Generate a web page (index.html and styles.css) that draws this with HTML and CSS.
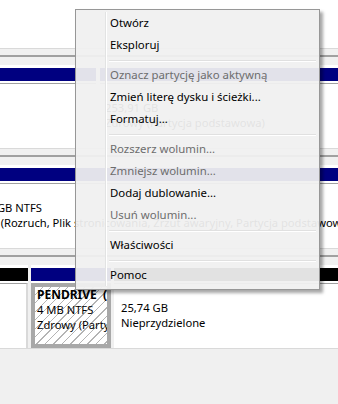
FILE: index.html
```html
<!DOCTYPE html>
<html lang="pl">
<head>
    <meta charset="UTF-8">
    <title>Zarządzanie dyskami</title>
    <link rel="stylesheet" href="styles.css">
</head>
<body>
    <div class="view">
        <div class="disk-tail"></div>

        <div class="disk">
            <div class="parts">
                <div class="part part-a">
                    <div class="bar primary"></div>
                    <div class="body"></div>
                </div>
                <div class="part part-b">
                    <div class="bar primary"></div>
                    <div class="body">
                        <div class="line name">&nbsp;</div>
                        <div class="line">253,91 GB</div>
                        <div class="line">Zdrowy (Partycja podstawowa)</div>
                    </div>
                </div>
            </div>
        </div>

        <div class="disk">
            <div class="parts">
                <div class="part part-wide">
                    <div class="bar primary"></div>
                    <div class="body shifted">
                        <div class="line name">&nbsp;</div>
                        <div class="line">232,79 GB NTFS</div>
                        <div class="line">Zdrowy (Rozruch, Plik stronicowania, Zrzut awaryjny, Partycja podstawowa)</div>
                    </div>
                </div>
            </div>
        </div>

        <div class="disk disk-last">
            <div class="parts">
                <div class="part part-small">
                    <div class="bar free"></div>
                    <div class="body"></div>
                </div>
                <div class="part part-pendrive">
                    <div class="bar primary"></div>
                    <div class="body selected">
                        <div class="line name">PENDRIVE&nbsp;&nbsp;(E:)</div>
                        <div class="line">4 MB NTFS</div>
                        <div class="line">Zdrowy (Partycja podstawowa)</div>
                    </div>
                </div>
                <div class="part part-rest">
                    <div class="bar free"></div>
                    <div class="body">
                        <div class="line name">&nbsp;</div>
                        <div class="line">25,74 GB</div>
                        <div class="line">Nieprzydzielone</div>
                    </div>
                </div>
            </div>
        </div>

        <div class="empty"></div>
    </div>

    <div class="menu">
        <ul>
            <li class="item">Otwórz</li>
            <li class="item">Eksploruj</li>
            <li class="sep"></li>
            <li class="item off">Oznacz partycję jako aktywną</li>
            <li class="item">Zmień literę dysku i ścieżki...</li>
            <li class="item">Formatuj...</li>
            <li class="sep"></li>
            <li class="item off">Rozszerz wolumin...</li>
            <li class="item off">Zmniejsz wolumin...</li>
            <li class="item">Dodaj dublowanie...</li>
            <li class="item off">Usuń wolumin...</li>
            <li class="sep"></li>
            <li class="item">Właściwości</li>
            <li class="sep"></li>
            <li class="item">Pomoc</li>
        </ul>
    </div>
</body>
</html>
```

FILE: styles.css
```css
* {
    box-sizing: border-box;
}
body {
    margin: 0;
    width: 338px;
    height: 404px;
    overflow: hidden;
    position: relative;
    background: #f0f0f0;
    color: #000;
    font-family: "Noto Sans", "Open Sans", sans-serif;
    font-size: 11.2px;
}

/* disk view behind the menu */
.view {
    display: flex;
    flex-direction: column;
}
.disk-tail {
    height: 49px;
    background: #fff;
    border-bottom: 1px solid #d9d9d9;
}
.disk {
    margin-top: 6px;
    height: 94px;
    border-top: 2px solid #a0a0a0;
    background: #f0f0f0;
    padding-top: 8px;
    border-bottom: 1px solid #d9d9d9;
}
.parts {
    display: flex;
    gap: 4px;
    height: 100%;
}
.disk-last .parts {
    gap: 3px;
}
.part {
    display: flex;
    flex-direction: column;
    background: #fff;
    padding-top: 3px;
}
.part-a { width: 96px; }
.part-b { flex: 1; }
.part-wide { flex: 1; }
.part-small { width: 28px; }
.part-pendrive { width: 80px; }
.part-rest { flex: 1; }
.bar {
    height: 13px;
    flex: none;
}
.bar.primary { background: #000080; }
.bar.free { background: #000; }
.body {
    flex: 1;
    margin-top: 2px;
    border-top: 1px solid #a0a0a0;
    padding: 1px 0 0 5px;
    white-space: nowrap;
    overflow: hidden;
}
.part-rest .body {
    padding-left: 7px;
}
.body.shifted {
    margin-left: -46px;
}
.body.selected {
    border: 4px solid #a8a8a8;
    padding: 0 0 0 2px;
    background: repeating-linear-gradient(135deg, #fff 0 5px, #b4b4b4 5px 6px);
}
.line {
    height: 15px;
    line-height: 15px;
}
.line.name {
    font-weight: bold;
    font-size: 12px;
}
.part-small .body {
    border-right: 2px solid #d9d9d9;
}
.empty {
    flex: 1;
    margin-top: 4px;
    height: 60px;
    background: linear-gradient(#a0a0a0 0 1px, #f0f0f0 1px 3px, #b8b8b8 3px 4px, #f0f0f0 4px);
}

/* context menu */
.menu {
    position: absolute;
    left: 75px;
    top: 9px;
    width: 245px;
    height: 281px;
    border: 1px solid #979797;
    background: rgba(240, 240, 240, 0.94);
    box-shadow: 3px 3px 3px rgba(0, 0, 0, 0.35);
    padding: 2px 2px 3px 2px;
}
.menu ul {
    list-style: none;
    margin: 0;
    padding: 0;
    height: 100%;
    background: linear-gradient(to right, transparent 27px, #e2e3e3 27px 28px, #fff 28px 29px, transparent 29px);
}
.item {
    height: 22px;
    line-height: 22px;
    padding-left: 32px;
    white-space: nowrap;
    font-size: 11.4px;
}
.item.off {
    color: #6d6d6d;
}
.sep {
    height: 8px;
    padding-top: 4px;
    margin-left: 31px;
    margin-right: 1px;
}
.sep::before {
    content: "";
    display: block;
    height: 1px;
    background: #e0e0e0;
    border-bottom: 1px solid #fff;
    box-sizing: content-box;
}
```
